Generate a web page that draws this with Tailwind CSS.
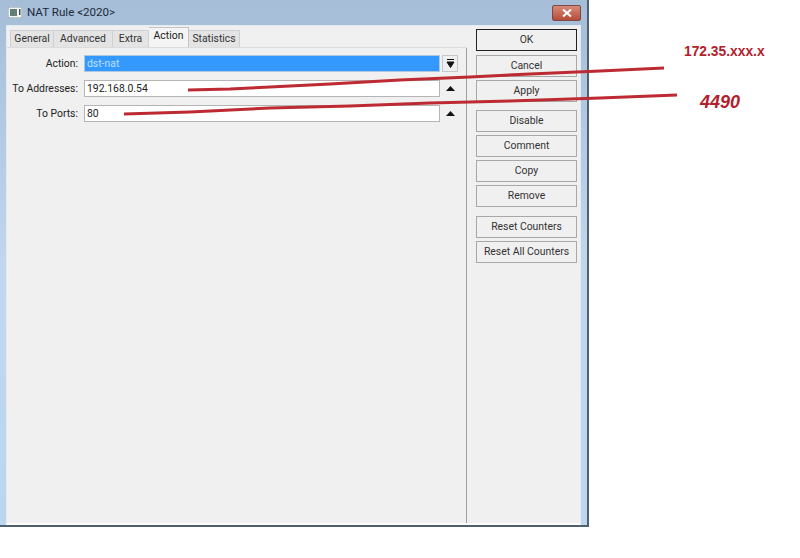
<!DOCTYPE html>
<html lang="en">
<head>
  <meta charset="UTF-8">
  <title>NAT Rule</title>
  <script src="https://cdn.jsdelivr.net/npm/@tailwindcss/browser@4"></script>
</head>
<body class="relative w-[800px] h-[558px] overflow-hidden bg-white font-['Roboto',sans-serif] text-[10.4px] text-[#222]">
  <div class="w-[589px] h-[527px] flex flex-col bg-gradient-to-b from-[#a5bdd6] via-[#c0d7ee] to-[#bcd6f0] border-r-2 border-b-2 border-[#50606e]">
    <!-- title bar -->
    <div class="h-[25px] shrink-0 flex items-center pl-[8px] pr-[6px]">
      <svg width="14" height="11" viewBox="0 0 14 11" class="mr-[5px]">
        <rect x="0" y="0" width="14" height="11" fill="#f4f6f4" stroke="#8a98a2"/>
        <rect x="2" y="2" width="7" height="7" fill="#5f7f78"/>
        <rect x="11" y="2" width="1.5" height="6" fill="#45545a"/>
      </svg>
      <span class="text-[11.6px] text-[#1a2a3a]">NAT Rule &lt;2020&gt;</span>
      <div class="ml-auto w-[29px] h-[16px] flex items-center justify-center rounded-[2px] border border-[#7a4a44] bg-gradient-to-b from-[#d88a78] to-[#b84a38]">
        <svg width="10" height="8" viewBox="0 0 10 8"><path d="M1 0.5L9 7.5M9 0.5L1 7.5" stroke="#fff" stroke-width="2"/></svg>
      </div>
    </div>
    <!-- client area -->
    <div class="flex-1 mx-[6px] flex bg-[#f0f0f0] border border-b-2 border-[#e4eaf0] border-b-white">
      <div class="w-[460px] shrink-0 flex flex-col h-full">
        <!-- tabs -->
        <div class="h-[22px] shrink-0 flex items-end pl-[3px] border-b border-[#dcdcdc]">
          <div class="w-[44px] h-[17px] flex items-center justify-center bg-[#e4e4e4] border border-[#d0d0d0] border-b-0 text-[#333]">General</div>
          <div class="w-[59px] h-[17px] flex items-center justify-center bg-[#e4e4e4] border border-l-0 border-[#d0d0d0] border-b-0 text-[#333]">Advanced</div>
          <div class="w-[36px] h-[17px] flex items-center justify-center bg-[#e4e4e4] border border-l-0 border-[#d0d0d0] border-b-0 text-[#333]">Extra</div>
          <div class="w-[40px] h-[20px] flex items-center justify-center bg-[#f4f4f4] border border-l-0 border-[#c4c4c4] border-b-0 text-[#222] pb-[3px]">Action</div>
          <div class="w-[51px] h-[17px] flex items-center justify-center bg-[#e4e4e4] border border-l-0 border-[#d0d0d0] border-b-0 text-[#333]">Statistics</div>
        </div>
        <!-- fields -->
        <div class="flex-1 border-r border-[#a0a0a0] pt-[7px] flex flex-col gap-[8px]">
          <div class="flex items-center h-[17px]">
            <div class="w-[71px] text-right">Action:</div>
            <div class="w-[356px] ml-[6px] h-[17px] bg-[#3399ff] border border-[#b0c8dc] text-[#bfe0ff] pl-[2px] leading-[15px]">dst-nat</div>
            <div class="w-[16px] h-[17px] ml-[2px] flex items-center justify-center bg-[#efefef] border border-[#c8c8c8]">
              <svg width="9" height="9" viewBox="0 0 9 9"><path d="M1 0.5H8M1 3H8L4.5 8.5Z" stroke="#111" stroke-width="1" fill="#111"/></svg>
            </div>
          </div>
          <div class="flex items-center h-[17px]">
            <div class="w-[71px] text-right">To Addresses:</div>
            <div class="w-[356px] ml-[6px] h-[17px] bg-white border border-[#b5b5b5] pl-[2px] leading-[15px]">192.168.0.54</div>
            <div class="w-[16px] ml-[2px] flex justify-center">
              <svg width="9" height="5" viewBox="0 0 9 5"><path d="M0 5L4.5 0L9 5Z" fill="#111"/></svg>
            </div>
          </div>
          <div class="flex items-center h-[17px]">
            <div class="w-[71px] text-right">To Ports:</div>
            <div class="w-[356px] ml-[6px] h-[17px] bg-white border border-[#b5b5b5] pl-[2px] leading-[15px]">80</div>
            <div class="w-[16px] ml-[2px] flex justify-center">
              <svg width="9" height="5" viewBox="0 0 9 5"><path d="M0 5L4.5 0L9 5Z" fill="#111"/></svg>
            </div>
          </div>
        </div>
      </div>
      <!-- buttons -->
      <div class="flex-1 pt-[3px] pl-[9px] pr-[3px] flex flex-col text-[#333]">
        <div class="h-[22px] flex items-center justify-center bg-[#f0f0f0] border border-[#222]">OK</div>
        <div class="mt-[4px] h-[22px] flex items-center justify-center bg-[#f0f0f0] border border-[#a8a8a8]">Cancel</div>
        <div class="mt-[3px] h-[22px] flex items-center justify-center bg-[#f0f0f0] border border-[#a8a8a8]">Apply</div>
        <div class="mt-[8px] h-[22px] flex items-center justify-center bg-[#f0f0f0] border border-[#a8a8a8]">Disable</div>
        <div class="mt-[3px] h-[22px] flex items-center justify-center bg-[#f0f0f0] border border-[#a8a8a8]">Comment</div>
        <div class="mt-[3px] h-[22px] flex items-center justify-center bg-[#f0f0f0] border border-[#a8a8a8]">Copy</div>
        <div class="mt-[3px] h-[22px] flex items-center justify-center bg-[#f0f0f0] border border-[#a8a8a8]">Remove</div>
        <div class="mt-[9px] h-[22px] flex items-center justify-center bg-[#f0f0f0] border border-[#a8a8a8]">Reset Counters</div>
        <div class="mt-[3px] h-[22px] flex items-center justify-center bg-[#f0f0f0] border border-[#a8a8a8]">Reset All Counters</div>
      </div>
    </div>
  </div>
  <!-- red annotations drawn over the screenshot -->
  <svg class="absolute left-0 top-0" width="800" height="558" viewBox="0 0 800 558">
    <path d="M188 90L230 89L270 87L330 84L400 80L470 77L530 74L600 71L664 68" stroke="#bd2a33" stroke-width="3" fill="none"/>
    <path d="M124 114L190 112L270 108L350 106L430 103L510 101L600 98L677 95" stroke="#bd2a33" stroke-width="3" fill="none"/>
  </svg>
  <div class="absolute left-[684px] top-[42px] font-['Liberation_Sans',sans-serif] text-[13.8px] leading-[20px] font-bold text-[#b3202c]">172.35.xxx.x</div>
  <div class="absolute left-[700px] top-[89px] font-['Liberation_Sans',sans-serif] text-[18px] leading-[27px] font-bold italic text-[#b3202c]">4490</div>
</body>
</html>
